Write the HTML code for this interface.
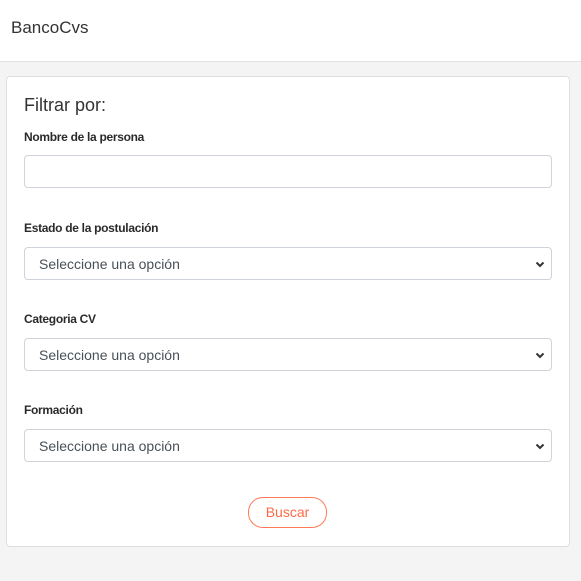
<!DOCTYPE html>
<html><head><style>
*{box-sizing:border-box;margin:0;padding:0}
body{width:581px;height:581px;background:#f4f4f4;font-family:"Liberation Sans",sans-serif;position:relative;overflow:hidden}
.hdr{position:absolute;left:0;top:0;width:581px;height:62px;background:#fff;border-bottom:1px solid #e2e2e2}
.hdr span{position:absolute;left:11px;top:18px;font-size:17px;color:#333}
.card{position:absolute;left:6px;top:76px;width:564px;height:471px;background:#fff;border:1px solid #dedede;border-radius:4px}
.t{position:absolute;left:17px;top:18px;font-size:18px;color:#333}
.l{position:absolute;left:17px;font-size:12px;font-weight:bold;color:#2a2a2a;letter-spacing:-0.3px}
.f{position:absolute;left:17px;width:528px;height:33px;border:1px solid #ced4da;border-radius:4px;font-size:14px;color:#495057;padding:8px 14px}
.f svg{position:absolute;right:6px;top:12px}
.b{position:absolute;left:241px;top:420px;width:79px;height:31px;border:1px solid #ff7a59;border-radius:15px;color:#ff6a45;font-size:14px;text-align:center;line-height:29px}
</style></head><body>
<div class="hdr"><span>BancoCvs</span></div>
<div class="card">
<div class="t">Filtrar por:</div>
<div class="l" style="top:53px">Nombre de la persona</div>
<div class="f" style="top:78px"></div>
<div class="l" style="top:144px">Estado de la postulación</div>
<div class="f" style="top:170px">Seleccione una opción<svg width="10" height="8" viewBox="0 0 10 8"><path d="M1.5 2.5L5 6L8.5 2.5" stroke="#333" stroke-width="2" fill="none"/></svg></div>
<div class="l" style="top:235px">Categoria CV</div>
<div class="f" style="top:261px">Seleccione una opción<svg width="10" height="8" viewBox="0 0 10 8"><path d="M1.5 2.5L5 6L8.5 2.5" stroke="#333" stroke-width="2" fill="none"/></svg></div>
<div class="l" style="top:326px">Formación</div>
<div class="f" style="top:352px">Seleccione una opción<svg width="10" height="8" viewBox="0 0 10 8"><path d="M1.5 2.5L5 6L8.5 2.5" stroke="#333" stroke-width="2" fill="none"/></svg></div>
<div class="b">Buscar</div>
</div>
</body></html>
